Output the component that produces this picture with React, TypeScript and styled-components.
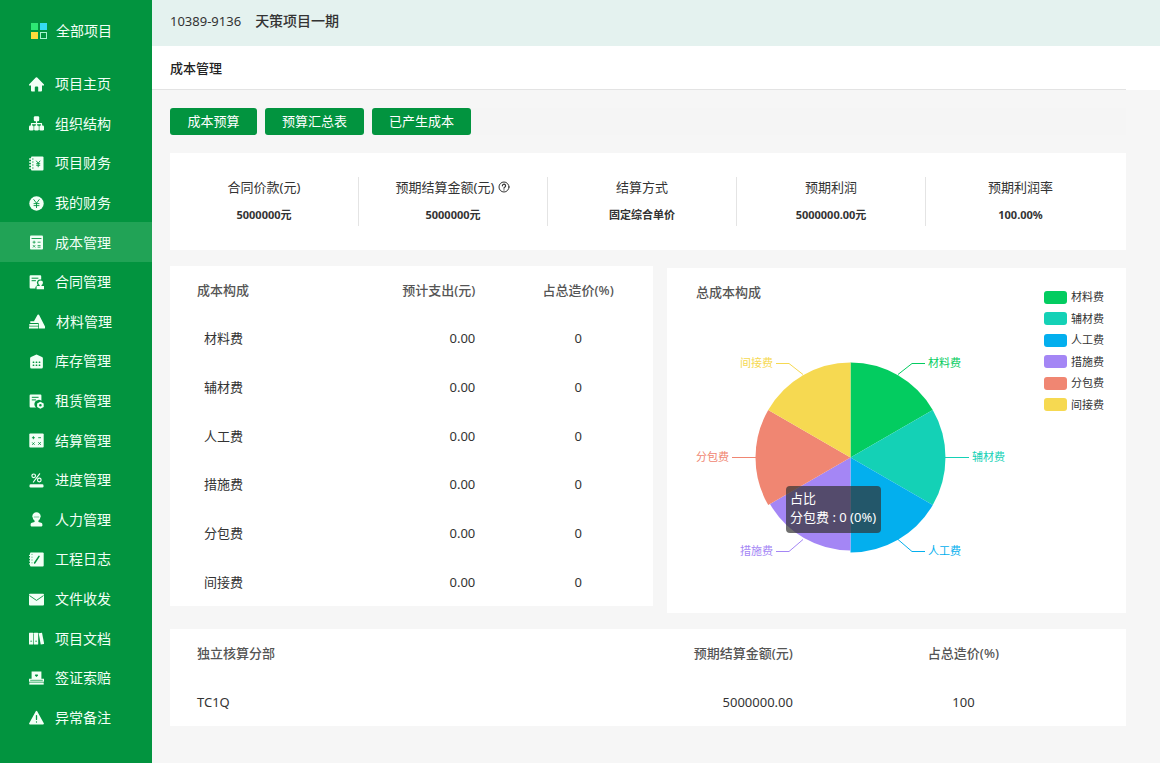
import React from 'react';
import styled, { createGlobalStyle } from 'styled-components';

const GREEN = '#02943f';

const GlobalStyle = createGlobalStyle`
  *, *::before, *::after { box-sizing: border-box; }
  body {
    margin: 0;
    background: #f6f6f6;
    color: #333;
    font-family: "Noto Sans", "Noto Sans CJK SC", sans-serif;
    font-size: 13px;
    line-height: 20px;
  }
`;

const Page = styled.div`
  display: flex;
  min-height: 100vh;
`;

/* ---------- sidebar ---------- */

const Sidebar = styled.aside`
  display: flex;
  flex-direction: column;
  flex: 0 0 152px;
  background: ${GREEN};
  font-size: 14px;
`;

const AllProjects = styled.a`
  display: flex;
  align-items: center;
  gap: 9px;
  height: 64px;
  padding-left: 31px;
  padding-bottom: 2px;
  color: #f2fff6;
  text-decoration: none;
`;

const Nav = styled.nav`
  display: flex;
  flex-direction: column;
  flex: 1;
  padding-bottom: 26px;
`;

const NavItem = styled.a<{ $active?: boolean }>`
  display: flex;
  align-items: center;
  flex: 1;
  gap: 11px;
  min-height: 32px;
  padding: 1px 0 0 29px;
  background: ${(p) => (p.$active ? '#21a356' : 'transparent')};
  color: #f2fff6;
  text-decoration: none;
`;

const NavIcon = styled.svg`
  flex: none;
  height: 15px;
  fill: currentColor;
  stroke: none;
`;

const g = GREEN;

const line = (d: string, color = g, w = 1) => (
  <path d={d} fill="none" stroke={color} strokeWidth={w} strokeLinecap="round" strokeLinejoin="round" />
);

const icons: Record<string, React.ReactNode> = {
  home: <path d="M6.8.5a1 1 0 0 1 1.400 0L15 7.600v.9h-2v5a1 1 0 0 1-1 1H9.200V10.500a1 1 0 0 0-1-1H6.800a1 1 0 0 0-1 1v4H3a1 1 0 0 1-1-1v-5H0v-.9Z" />,
  org: (
    <>
      <rect x="4.800" y="0.300" width="5.400" height="5" rx="1.200" />
      {line('M7.5 5v5M2.5 10V7.6h10V10', 'currentColor', 1.2)}
      <rect x="0" y="9.600" width="4.600" height="4.900" rx="1.200" />
      <rect x="5.200" y="9.600" width="4.600" height="4.900" rx="1.200" />
      <rect x="10.400" y="9.600" width="4.600" height="4.900" rx="1.200" />
    </>
  ),
  ledger: (
    <>
      <rect x="2" y="0.5" width="12.5" height="14" rx="1" />
      {line('M.6 3h3M.6 6h3M.6 9h3M.6 12h3', 'currentColor', 1.3)}
      {line('M3.4 3h.8M3.4 6h.8M3.4 9h.8M3.4 12h.8', g, 0.800)}
      {line('M7.400 5 9.200 7.200 11 5M9.200 7.200v3.600M7.600 7.700h3.200M7.600 9.300h3.200', g, 0.900)}
    </>
  ),
  yen: (
    <>
      <circle cx="7.5" cy="7.5" r="7.2" />
      {line('M4.8 3.6 7.5 7.2l2.7-3.6M7.5 7.2v4.4M5 7.6h5M5 9.6h5', g, 0.900)}
    </>
  ),
  cost: (
    <>
      <rect x="1" y="0.5" width="13" height="14" rx="1" />
      {line('M3 3.5h9', '#21a356', 1.2)}
      {line('M4 7.2h2.2M5.100 6.100v2.2M9 7.200h2.2M4.2 10.4l1.800 1.800M6 10.4l-1.800 1.800M9 10.6h2.2M9 12.2h2.2', '#21a356', 0.900)}
    </>
  ),
  contract: (
    <>
      <path d="M1.600.2h9.600a1 1 0 0 1 1 1v3.400A3.300 3.300 0 0 0 8.600 9.800L6.400 12v1.400H1.600a1 1 0 0 1-1-1V1.200a1 1 0 0 1 1-1Z" />
      {line('M3 3.200h6M3 5.700h3.500')}
      <circle cx="11.600" cy="7.800" r="2.400" />
      <path d="M10.700 9h1.800v2H15v3.200H7.600V11h3.100Z" />
    </>
  ),
  material: (
    <>
      <path d="M8.600.8a.8.800 0 0 1 1.400 0L16.300 13.200a.8.800 0 0 1-.7 1.200H10V9.400L4.800 7.600Z" />
      <path d="M1.300 7.200h7.200v1.900H1.300ZM.3 9.900h9v1.900h-9ZM0 12.500h9.300v1.900H0Z" />
    </>
  ),
  warehouse: (
    <>
      <path d="M6.900.7a1.400 1.400 0 0 1 1.200 0L13 3a1.500 1.500 0 0 1 .9 1.400v8.600a1.500 1.500 0 0 1-1.500 1.500H2.600A1.500 1.500 0 0 1 1.100 13V4.400A1.500 1.500 0 0 1 2 3Z" />
      {line('M4.300 8.200h.4M7.300 8.200h.4M4.300 11.300h.4M7.300 11.300h.4M10.300 11.300h.4M10.300 8.200h.4', g, 1.500)}
    </>
  ),
  lease: (
    <>
      <path d="M1.600.4h9.800a1 1 0 0 1 1 1v5.400A4.200 4.200 0 0 0 7 13.600H1.600a1 1 0 0 1-1-1V1.400a1 1 0 0 1 1-1Z" />
      {line('M3.200 3.300h6M3.200 5.900h3.400')}
      <path fillRule="evenodd" d="M11.400 7.700 14.700 9.500v3.400l-3.300 1.900-3.300-1.900V9.500Zm0 2.300a1.300 1.300 0 1 0 0 2.600 1.300 1.300 0 0 0 0-2.600Z" />
    </>
  ),
  settle: (
    <>
      <rect x="0.300" y="0.500" width="14.400" height="14" rx="1" />
      {line('M3.300 4.700h2.200M4.400 3.600v2.200M9.600 4.700h2M3.500 9.700l1.800 1.800M5.300 9.700l-1.800 1.800M9.600 9.500l1.900 2M11.500 9.500l-1.900 2', g, 0.900)}
    </>
  ),
  progress: (
    <>
      <rect x="0.500" y="11.200" width="14" height="3.200" rx="1.200" />
      <g fill="none" stroke="currentColor" strokeWidth="1.200" strokeLinecap="round">
        <circle cx="4.700" cy="2.800" r="1.800" />
        <circle cx="10.300" cy="7" r="1.800" />
        <path d="M10.600.8 4.400 9" />
      </g>
    </>
  ),
  worker: (
    <>
      <path d="M3.300 4.400a4.200 4.200 0 0 1 8.400 0v.9h-.4a3.800 3.800 0 0 1-1.900 3.500v1.100l2.700.8a1.800 1.800 0 0 1 1.300 1.700v1.200a.8.800 0 0 1-.8.800H2.400a.8.800 0 0 1-.8-.8v-1.200a1.800 1.800 0 0 1 1.300-1.700l2.700-.8V8.800a3.800 3.800 0 0 1-1.900-3.500h-.4Z" />
      {line('M5.200 5h4.600', g, 0.500)}
    </>
  ),
  journal: (
    <>
      <rect x="1" y="0.500" width="13.700" height="14" rx="1" />
      {line('M.5 3.400h2M.5 6.200h2M.5 9h2M.5 11.800h2', 'currentColor', 1.200)}
      {line('M5.600 11 10 4.300', g, 1.500)}
      {line('M2.900 2.400h.2M2.900 5.200h.2M2.900 8h.2M2.900 10.800h.2', g, 0.700)}
    </>
  ),
  mail: (
    <>
      <rect x="0" y="1.800" width="15" height="11.800" rx="1" />
      {line('M.8 3.800 7.500 8.400l6.700-4.600', g, 0.900)}
    </>
  ),
  books: (
    <>
      <rect x="0" y="1.800" width="4.300" height="11.800" rx="0.500" />
      <rect x="4.900" y="1.800" width="4.300" height="11.800" rx="0.500" />
      <path d="m9.700 2.200 3.300-.5L15.200 12.900l-3.500.7Z" />
      {line('M1.700 10.200h1M6.600 10.200h1', g, 0.800)}
    </>
  ),
  stamp: (
    <>
      <path d="M2.600.4h9.800v7.300H15v3.100H0V7.700h2.600Z" />
      <rect x="0.300" y="11.500" width="14.400" height="2.100" />
      {line('M1.600 9.300h11.800', g, 0.700)}
      <path d="M7.500 6.100 5.900 4.500a1 1 0 0 1 1.600-.9 1 1 0 0 1 1.600.9Z" fill={g} />
    </>
  ),
  warning: (
    <>
      <path d="M7.500.8a.8.800 0 0 1 .7.400l6.600 12a.8.800 0 0 1-.7 1.200H.9a.8.800 0 0 1-.7-1.200l6.600-12a.8.800 0 0 1 .7-.4Z" />
      {line('M7.500 5.600v3.800M7.500 11.900v.1', g, 1.300)}
    </>
  ),
};

const menu = [
  { icon: 'home', label: '项目主页' },
  { icon: 'org', label: '组织结构' },
  { icon: 'ledger', label: '项目财务' },
  { icon: 'yen', label: '我的财务' },
  { icon: 'cost', label: '成本管理', active: true },
  { icon: 'contract', label: '合同管理' },
  { icon: 'material', label: '材料管理', width: 16 },
  { icon: 'warehouse', label: '库存管理' },
  { icon: 'lease', label: '租赁管理' },
  { icon: 'settle', label: '结算管理' },
  { icon: 'progress', label: '进度管理' },
  { icon: 'worker', label: '人力管理' },
  { icon: 'journal', label: '工程日志' },
  { icon: 'mail', label: '文件收发' },
  { icon: 'books', label: '项目文档' },
  { icon: 'stamp', label: '签证索赔' },
  { icon: 'warning', label: '异常备注' },
];

/* ---------- main column ---------- */

const Main = styled.main`
  flex: 1;
  min-width: 0;
`;

const ProjectBar = styled.header`
  display: flex;
  align-items: center;
  gap: 14px;
  height: 46px;
  padding: 0 18px 4px;
  background: #e4f2ef;
`;

const ProjectName = styled.strong`
  font-size: 14px;
  font-weight: 500;
`;

const TitleBar = styled.div`
  padding-right: 34px;
  background: #fff;
`;

const PageTitle = styled.h1`
  margin: 0;
  padding: 12px 18px 11px;
  border-bottom: 1px solid #e3e3e3;
  font-size: 13px;
  font-weight: 500;
  line-height: 20px;
  color: #222;
`;

const Content = styled.div`
  padding: 18px 34px 37px 18px;
`;

const Toolbar = styled.div`
  display: flex;
  gap: 8px;
  margin-bottom: 18px;
  background: #f5f5f5;
`;

const ToolButton = styled.button`
  min-width: 87px;
  height: 27px;
  padding: 0 17px 2px;
  border: 0;
  border-radius: 3px;
  background: ${GREEN};
  color: #fff;
  font: inherit;
  cursor: pointer;
`;

const Card = styled.section`
  background: #fff;
`;

const Stats = styled(Card)`
  display: grid;
  grid-template-columns: repeat(5, 1fr);
  margin-bottom: 16px;
  padding: 24px 11px 24px 0;
`;

const Stat = styled.dl`
  height: 49px;
  margin: 0;
  text-align: center;
  &:not(:last-child) { border-right: 1px solid #e4e4e4; }
`;

const StatLabel = styled.dt`
  display: flex;
  align-items: center;
  justify-content: center;
  gap: 4px;
  margin-bottom: 8px;
`;

const StatValue = styled.dd`
  margin: 0;
  font-size: 11px;
  font-weight: 700;
`;

const Columns = styled.div`
  display: grid;
  grid-template-columns: 483fr 459fr;
  align-items: start;
  gap: 14px;
  margin-bottom: 16px;
`;

const Table = styled.table<{ $height: number }>`
  width: 100%;
  height: ${(p) => p.$height}px;
  table-layout: fixed;
  border-collapse: collapse;
`;

const Row = styled.tr`
  height: 48px;
`;

const Th = styled.th<{ $align?: string; $width: string; $end?: number }>`
  width: ${(p) => p.$width};
  padding: 0 ${(p) => p.$end ?? 0}px 0 ${(p) => (p.$align ? 0 : 27)}px;
  color: #555;
  font-weight: 500;
  text-align: ${(p) => p.$align ?? 'left'};
`;

const Td = styled.td<{ $align?: string; $start?: number; $end?: number }>`
  padding: 0 ${(p) => p.$end ?? 0}px 0 ${(p) => p.$start ?? 0}px;
  text-align: ${(p) => p.$align ?? 'left'};
`;

/* ---------- chart ---------- */

const ChartCard = styled(Card)`
  position: relative;
  display: grid;
  height: 345px;
  margin-top: 2px;
`;

const ChartHead = styled.div`
  grid-area: 1 / 1;
  display: flex;
  justify-content: space-between;
  align-items: flex-start;
  padding: 14px 22px 0 29px;
`;

const ChartTitle = styled.h2`
  margin: 0;
  color: #555;
  font-size: 13px;
  font-weight: 500;
  line-height: 20px;
`;

const Legend = styled.ul`
  display: flex;
  flex-direction: column;
  justify-content: space-between;
  height: 122px;
  margin: 8px 0 0;
  padding: 0;
  list-style: none;
  font-size: 11px;
  line-height: 14px;
`;

const LegendItem = styled.li`
  display: flex;
  align-items: center;
  gap: 4px;
`;

const Swatch = styled.span<{ $color: string }>`
  width: 23px;
  height: 13px;
  border-radius: 3px;
  background: ${(p) => p.$color};
`;

const ChartStage = styled.div`
  position: relative;
  grid-area: 1 / 1;
  width: 360px;
  height: 345px;
`;

const Pie = styled.svg`
  display: block;
  font-size: 11px;
`;

const Tooltip = styled.div`
  position: absolute;
  left: 119px;
  top: 218px;
  padding: 3px 5px 6px 4px;
  border-radius: 4px;
  background: rgba(50, 50, 50, 0.7);
  color: #fff;
  line-height: 19px;
  white-space: nowrap;
`;

const slices = [
  { name: '材料费', color: '#03cc60', r: 95, line: '231,107 245,96 258,96', x: 261, y: 99, anchor: 'start' },
  { name: '辅材费', color: '#14d1b6', r: 95, line: '278,190 302,190', x: 305, y: 193, anchor: 'start' },
  { name: '人工费', color: '#03afee', r: 95, line: '231,272 245,284 258,284', x: 261, y: 287, anchor: 'start' },
  { name: '措施费', color: '#a486f5', r: 93, line: '136,272 122,284 109,284', x: 106, y: 287, anchor: 'end' },
  { name: '分包费', color: '#f08672', r: 95, line: '89,190 65,190', x: 62, y: 193, anchor: 'end' },
  { name: '间接费', color: '#f6d951', r: 95, line: '136,107 122,96 109,96', x: 106, y: 99, anchor: 'end' },
] as const;

const CX = 183.5;
const CY = 189.5;

function slicePath(i: number, r: number) {
  const at = (k: number) => {
    const a = (k * Math.PI) / 3;
    return `${(CX + r * Math.sin(a)).toFixed(2)} ${(CY - r * Math.cos(a)).toFixed(2)}`;
  };
  return `M${CX} ${CY}L${at(i)}A${r} ${r} 0 0 1 ${at(i + 1)}Z`;
}

export default function App() {
  return (
    <>
      <GlobalStyle />
      <Page>
        <Sidebar>
          <AllProjects href="#all">
            <svg width="16" height="16" viewBox="0 0 16 16" aria-hidden="true">
              <rect width="7" height="7" fill="#2ee873" />
              <rect x="9" width="7" height="7" fill="#35dcf2" />
              <rect y="9" width="7" height="7" fill="#ffdc3c" />
              <rect x="9.5" y="9.5" width="6" height="6" fill="none" stroke="#a8f5d0" />
            </svg>
            全部项目
          </AllProjects>
          <Nav>
            {menu.map((m) => (
              <NavItem key={m.label} href={`#${m.icon}`} $active={m.active}>
                <NavIcon width={m.width ?? 15} viewBox={`0 0 ${m.width ?? 15} 15`} aria-hidden="true">
                  {icons[m.icon]}
                </NavIcon>
                {m.label}
              </NavItem>
            ))}
          </Nav>
        </Sidebar>

        <Main>
          <ProjectBar>
            <span>10389-9136</span>
            <ProjectName>天策项目一期</ProjectName>
          </ProjectBar>
          <TitleBar>
            <PageTitle>成本管理</PageTitle>
          </TitleBar>

          <Content>
            <Toolbar>
              <ToolButton type="button">成本预算</ToolButton>
              <ToolButton type="button">预算汇总表</ToolButton>
              <ToolButton type="button">已产生成本</ToolButton>
            </Toolbar>

            <Stats>
              <Stat>
                <StatLabel>合同价款(元)</StatLabel>
                <StatValue>5000000元</StatValue>
              </Stat>
              <Stat>
                <StatLabel>
                  预期结算金额(元)
                  <svg width="12" height="12" viewBox="0 0 12 12" fill="none" stroke="#333" strokeLinecap="round" aria-hidden="true">
                    <circle cx="6" cy="6" r="5" />
                    <path d="M4.400 4.800a1.600 1.600 0 1 1 2.500 1.300q-.9.500-.9 1.100M6 8.800v.1" strokeWidth="1.200" />
                  </svg>
                </StatLabel>
                <StatValue>5000000元</StatValue>
              </Stat>
              <Stat>
                <StatLabel>结算方式</StatLabel>
                <StatValue>固定综合单价</StatValue>
              </Stat>
              <Stat>
                <StatLabel>预期利润</StatLabel>
                <StatValue>5000000.00元</StatValue>
              </Stat>
              <Stat>
                <StatLabel>预期利润率</StatLabel>
                <StatValue>100.00%</StatValue>
              </Stat>
            </Stats>

            <Columns>
              <Card>
                <Table $height={340}>
                  <thead>
                    <Row>
                      <Th $width="44%">成本构成</Th>
                      <Th $width="25%" $align="right" $end={28}>预计支出(元)</Th>
                      <Th $width="31%" $align="center">占总造价(%)</Th>
                    </Row>
                  </thead>
                  <tbody>
                    {slices.map((s) => (
                      <Row key={s.name}>
                        <Td $start={34}>{s.name}</Td>
                        <Td $align="right" $end={28}>0.00</Td>
                        <Td $align="center">0</Td>
                      </Row>
                    ))}
                  </tbody>
                </Table>
              </Card>

              <ChartCard>
                <ChartStage>
                  <Pie width="360" height="345" viewBox="0 0 360 345" role="img" aria-label="总成本构成">
                    {slices.map((s, i) => (
                      <g key={s.name}>
                        <path d={slicePath(i, s.r)} fill={s.color} />
                        <polyline points={s.line} transform="translate(0 -0.5)" fill="none" stroke={s.color} />
                        <text x={s.x} y={s.y} fill={s.color} textAnchor={s.anchor}>{s.name}</text>
                      </g>
                    ))}
                  </Pie>
                  <Tooltip role="tooltip">
                    占比
                    <br />
                    分包费 : 0 (0%)
                  </Tooltip>
                </ChartStage>
                <ChartHead>
                  <ChartTitle>总成本构成</ChartTitle>
                  <Legend>
                    {slices.map((s) => (
                      <LegendItem key={s.name}>
                        <Swatch $color={s.color} />
                        {s.name}
                      </LegendItem>
                    ))}
                  </Legend>
                </ChartHead>
              </ChartCard>
            </Columns>

            <Card>
              <Table $height={97}>
                <thead>
                  <Row>
                    <Th $width="34%">独立核算分部</Th>
                    <Th $width="32%" $align="right" $end={8}>预期结算金额(元)</Th>
                    <Th $width="34%" $align="center">占总造价(%)</Th>
                  </Row>
                </thead>
                <tbody>
                  <Row>
                    <Td $start={27}>TC1Q</Td>
                    <Td $align="right" $end={8}>5000000.00</Td>
                    <Td $align="center">100</Td>
                  </Row>
                </tbody>
              </Table>
            </Card>
          </Content>
        </Main>
      </Page>
    </>
  );
}
